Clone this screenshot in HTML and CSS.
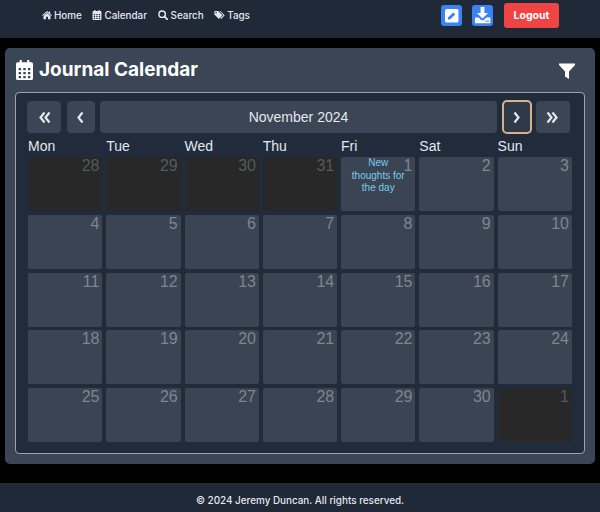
FILE: index.html
```html
<!DOCTYPE html>
<html lang="en">
<head>
  <meta charset="UTF-8" />
  <title>Journal Calendar</title>
  <link rel="stylesheet" href="styles.css">
</head>
<body>

<header class="topbar">
  <nav class="nav-links">
    <a href="#"><svg class="icon" viewBox="0 0 16 14"><path d="M8 0.6 L0.2 7.2 L1.2 8.4 L8 2.7 L14.8 8.4 L15.8 7.2 L13 4.8 V1.2 H11 V3.1 Z"/><path d="M8 3.9 L2.4 8.6 V13.6 H6.4 V9.6 H9.6 V13.6 H13.6 V8.6 Z"/></svg>Home</a>
    <a href="#"><svg class="icon" viewBox="0 0 14 15"><use href="#cal"/></svg>Calendar</a>
    <a href="#"><svg class="icon icon-search" viewBox="0 0 14 14"><circle cx="5.8" cy="5.8" r="4.5" fill="none" stroke="currentColor" stroke-width="2"/><path d="M9 9 L13 13" stroke="currentColor" stroke-width="2.4" stroke-linecap="round"/></svg>Search</a>
    <a href="#"><svg class="icon icon-tags" viewBox="0 0 16 13"><path d="M0.5 1.5 A1 1 0 0 1 1.5 0.5 H6 L12.4 6.9 L7.2 12.2 L0.5 5.8 Z M3 2.2 A1 1 0 1 0 3.01 2.2 Z" fill-rule="evenodd"/><path d="M8 0.5 H9.4 L15.6 6.9 L10.4 12.2 L9.3 11.2 L13.7 6.9 Z"/></svg>Tags</a>
  </nav>
  <div class="nav-actions">
    <a class="icon-btn" href="#"><svg viewBox="0 0 21 21"><rect x="4" y="4" width="13.5" height="13.5" rx="1.5" fill="#fff"/><path d="M6.8 14.8 L7.3 12.3 L12.2 7.4 L14.2 9.4 L9.3 14.3 Z" fill="#3b82f6"/></svg></a>
    <a class="icon-btn" href="#"><svg viewBox="0 0 21 21"><path d="M8.6 2 H12.4 V8 H16 L10.5 13.4 L5 8 H8.6 Z" fill="#fff"/><path d="M3 12.6 H6.6 L9.2 15.2 H11.8 L14.4 12.6 H18.4 V18.2 H3 Z" fill="#fff"/><path d="M13.4 16.2 H17" stroke="#3b82f6" stroke-width="1"/></svg></a>
    <a class="logout" href="#">Logout</a>
  </div>
</header>

<svg class="defs" width="0" height="0">
  <symbol id="cal">
    <path fill-rule="evenodd" d="M3 0 H4.8 V1.6 H9.2 V0 H11 V1.6 H12.6 A1.4 1.4 0 0 1 14 3 V13.6 A1.4 1.4 0 0 1 12.6 15 H1.4 A1.4 1.4 0 0 1 0 13.6 V3 A1.4 1.4 0 0 1 1.4 1.6 H3 Z M2.2 6 V7.7 H4.2 V6 Z M6 6 V7.7 H8 V6 Z M9.8 6 V7.7 H11.8 V6 Z M2.2 9 V10.7 H4.2 V9 Z M6 9 V10.7 H8 V9 Z M9.8 9 V10.7 H11.8 V9 Z M2.2 12 V13.6 H4.2 V12 Z M6 12 V13.6 H8 V12 Z M9.8 12 V13.6 H11.8 V12 Z"/>
  </symbol>
  <symbol id="chev-left">
    <path d="M7.5 1.5 L3.5 6.5 L7.5 11.5" fill="none" stroke="currentColor" stroke-width="2.2"/>
  </symbol>
</svg>

<main class="content">
  <section class="card">
    <div class="card-head">
      <h1><svg class="title-icon" viewBox="0 0 14 15" preserveAspectRatio="none"><use href="#cal"/></svg>Journal Calendar</h1>
      <svg class="filter" viewBox="0 0 16 16"><path d="M0 0.5 H16 V2 L10 8.4 V16 L6 13.4 V8.4 L0 2 Z"/></svg>
    </div>

    <div class="calendar">
      <div class="toolbar">
        <button class="tb-btn tb-wide"><svg class="chev" viewBox="0 0 14 13"><use href="#chev-left" x="0"/><use href="#chev-left" x="5"/></svg></button>
        <button class="tb-btn tb-small"><svg class="chev" viewBox="0 0 11 13"><use href="#chev-left"/></svg></button>
        <button class="tb-btn tb-label">November 2024</button>
        <button class="tb-btn tb-small tb-focus"><svg class="chev flip" viewBox="0 0 11 13"><use href="#chev-left"/></svg></button>
        <button class="tb-btn tb-wide"><svg class="chev flip" viewBox="0 0 14 13"><use href="#chev-left" x="0"/><use href="#chev-left" x="5"/></svg></button>
      </div>

      <div class="weekdays">
        <span>Mon</span><span>Tue</span><span>Wed</span><span>Thu</span><span>Fri</span><span>Sat</span><span>Sun</span>
      </div>

      <div class="days">
        <div class="day other">28</div>
        <div class="day other">29</div>
        <div class="day other">30</div>
        <div class="day other">31</div>
        <div class="day"><span class="num">1</span><a class="entry" href="#">New thoughts for the day</a></div>
        <div class="day">2</div>
        <div class="day">3</div>
        <div class="day">4</div>
        <div class="day">5</div>
        <div class="day">6</div>
        <div class="day">7</div>
        <div class="day">8</div>
        <div class="day">9</div>
        <div class="day">10</div>
        <div class="day">11</div>
        <div class="day">12</div>
        <div class="day">13</div>
        <div class="day">14</div>
        <div class="day">15</div>
        <div class="day">16</div>
        <div class="day">17</div>
        <div class="day">18</div>
        <div class="day">19</div>
        <div class="day">20</div>
        <div class="day">21</div>
        <div class="day">22</div>
        <div class="day">23</div>
        <div class="day">24</div>
        <div class="day">25</div>
        <div class="day">26</div>
        <div class="day">27</div>
        <div class="day">28</div>
        <div class="day">29</div>
        <div class="day">30</div>
        <div class="day other">1</div>
      </div>
    </div>
  </section>
</main>

<footer class="footer">© 2024 Jeremy Duncan. All rights reserved.</footer>

</body>
</html>
```

FILE: styles.css
```css
body {
  margin: 0;
  height: 512px;
  overflow: hidden;
  display: flex;
  flex-direction: column;
  background: #000;
  color: #fff;
  font-family: 'Inter', 'Liberation Sans', sans-serif;
}

.defs {
  position: absolute;
}

.topbar {
  height: 38px;
  flex: none;
  display: flex;
  justify-content: space-between;
  align-items: flex-start;
  padding: 0 41px 0 42px;
  background: #1f2937;
}

.nav-links {
  display: flex;
  gap: 10.5px;
  height: 30px;
  align-items: center;
}

.nav-links a {
  display: flex;
  align-items: center;
  color: #e5e7eb;
  text-decoration: none;
  font-size: 9.9px;
  font-weight: 500;
}

.icon {
  width: 10px;
  height: 10px;
  margin-right: 2px;
  fill: currentColor;
}

.icon-search {
  margin-right: 3px;
}

.icon-tags {
  width: 11px;
}

.nav-actions {
  display: flex;
  align-items: center;
  gap: 10px;
  height: 31px;
}

.icon-btn {
  width: 21px;
  height: 21px;
  background: #3b82f6;
  border-radius: 3px;
}

.icon-btn svg {
  display: block;
  width: 21px;
  height: 21px;
}

.logout {
  width: 55px;
  height: 25px;
  margin-left: 1px;
  line-height: 25px;
  text-align: center;
  background: #ef4444;
  border-radius: 3px;
  color: #fff;
  text-decoration: none;
  font-size: 10.5px;
  font-weight: 700;
}

.content {
  flex: 1;
  padding: 10px 5px 19px;
}

.card {
  height: 416px;
  box-sizing: border-box;
  padding: 9px 10px 10px;
  background: #3a4556;
  border-radius: 5px;
}

.card-head {
  display: flex;
  justify-content: space-between;
  align-items: center;
  height: 25px;
  padding-bottom: 10px;
}

.card-head h1 {
  margin: 0;
  display: flex;
  align-items: center;
  font-size: 19px;
  font-weight: 700;
  color: #fff;
}

.title-icon {
  width: 17px;
  height: 20px;
  margin: 0 6px 0 1px;
  fill: #fff;
}

.filter {
  width: 16px;
  height: 16px;
  margin: 3px 10px 0 0;
  fill: #fff;
}

.calendar {
  height: 362px;
  box-sizing: border-box;
  padding: 8px 12px;
  background: #202c3c;
  border: 1px solid #9ca3af;
  border-radius: 4px;
  font-family: 'Liberation Sans', Arial, sans-serif;
}

.toolbar {
  display: flex;
  align-items: center;
  gap: 5.5px;
  height: 32px;
  margin: 0 2px 0 -1px;
}

.tb-btn {
  height: 32px;
  padding: 0;
  display: flex;
  justify-content: center;
  align-items: center;
  background: #3a4556;
  border: 0;
  border-radius: 4px;
  color: #e5e7eb;
  font-family: 'Liberation Sans', Arial, sans-serif;
  font-size: 14px;
}

.tb-wide {
  width: 34px;
}

.tb-small {
  width: 28px;
}

.tb-label {
  flex: 1;
}

.tb-focus {
  background: #2e3a4a;
  outline: 2px solid #dcae8c;
  outline-offset: -1px;
}

.chev {
  width: 14px;
  height: 13px;
}

.tb-small .chev {
  width: 11px;
}

.flip {
  transform: scaleX(-1);
}

.weekdays,
.days {
  display: grid;
  grid-template-columns: repeat(7, 1fr);
  column-gap: 3.83px;
}

.weekdays {
  height: 24px;
  align-items: center;
  padding-top: 1px;
  box-sizing: border-box;
  font-size: 14px;
  color: #e5e7eb;
}

.days {
  grid-auto-rows: 54px;
  row-gap: 3.75px;
}

.day {
  position: relative;
  box-sizing: border-box;
  padding: 0 3px 0 0;
  background: #3a4452;
  border-radius: 2px;
  color: #7f8691;
  font-size: 16px;
  line-height: 18px;
  text-align: right;
}

.day.other {
  background: #282828;
  color: #55595f;
}

.num {
  display: block;
}

.entry {
  position: absolute;
  left: 7px;
  right: 7px;
  top: 0;
  color: #78cbef;
  font-size: 10px;
  line-height: 12.5px;
  text-align: center;
  text-decoration: none;
}

.footer {
  height: 29px;
  flex: none;
  display: flex;
  justify-content: center;
  align-items: center;
  padding-top: 5px;
  box-sizing: border-box;
  background: #1f2937;
  color: #e5e7eb;
  font-size: 9.9px;
  font-weight: 500;
}
```
